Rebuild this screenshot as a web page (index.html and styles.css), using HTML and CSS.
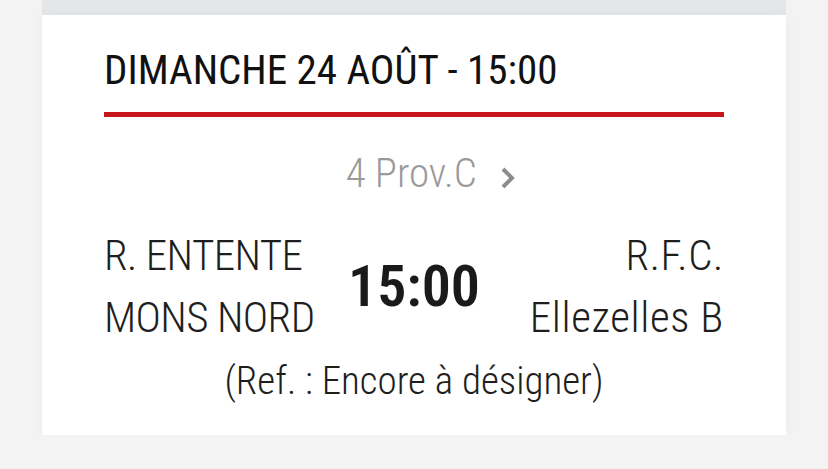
FILE: index.html
```html
<!DOCTYPE html>
<html lang="fr">
<head>
    <meta charset="UTF-8">
    <meta name="viewport" content="width=device-width, initial-scale=1.0">
    <title>Match</title>
    <link rel="stylesheet" href="styles.css">
</head>
<body>

    <!-- Bord de la carte précédente -->
    <div class="prev-card"></div>

    <!-- Carte du match -->
    <div class="match-card">
        <h2 class="match-date">DIMANCHE 24 AOÛT - 15:00</h2>

        <div class="match-series">
            <span class="series-name">4 Prov.C</span>
            <svg class="chevron" width="16" height="22" viewBox="0 0 16 22">
                <path d="M3 2 L12 11 L3 20" fill="none" stroke="#8c8c8c" stroke-width="4"/>
            </svg>
        </div>

        <div class="match-row">
            <div class="team team-home">R. ENTENTE<br>MONS NORD</div>
            <div class="match-time">15:00</div>
            <div class="team team-away">R.F.C.<br>Ellezelles B</div>
        </div>

        <div class="match-ref">(Ref. : Encore à désigner)</div>
    </div>

</body>
</html>
```
FILE: styles.css
```css
body {
    font-family: "Roboto Condensed", Roboto, sans-serif;
    background-color: #f3f3f3;
    margin: 0;
    padding: 0 42px;
    color: #1a1a1a;
}
.prev-card {
    height: 15px;
    background-color: #e5e6e8;
}
.match-card {
    background-color: #fff;
    padding: 30px 62px 0;
    height: 420px;
    box-sizing: border-box;
    box-shadow: 0 0 12px rgba(0, 0, 0, 0.04);
}
.match-date {
    margin: 0;
    font-size: 41px;
    line-height: 50px;
    font-weight: 400;
    color: #111;
    padding-bottom: 17px;
    border-bottom: 5px solid #c8161d;
}
.match-series {
    margin-top: 32px;
    text-align: center;
    font-size: 41px;
    line-height: 48px;
    font-weight: 300;
    color: #9a9a9a;
    padding-left: 34px;
}
.chevron {
    margin-left: 14px;
    vertical-align: -2px;
}
.match-row {
    display: grid;
    grid-template-columns: 1fr auto 1fr;
    align-items: center;
    margin-top: 27px;
}
.team {
    font-size: 43px;
    line-height: 62px;
    font-weight: 300;
    color: #1e1e1e;
}
.team-home {
    letter-spacing: -0.6px;
}
.team-away {
    text-align: right;
    letter-spacing: 0.6px;
}
.match-time {
    font-size: 58px;
    font-weight: 600;
    color: #1a1a1a;
}
.match-ref {
    margin-top: 10px;
    text-align: center;
    font-size: 39px;
    line-height: 46px;
    font-weight: 300;
    color: #1e1e1e;
}
```
